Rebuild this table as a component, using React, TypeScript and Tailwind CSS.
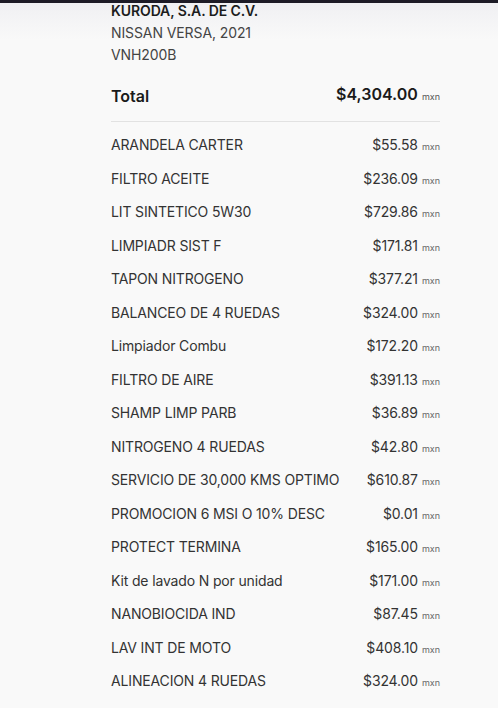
import React from "react";

const items: [string, string][] = [
  ["ARANDELA CARTER", "$55.58"],
  ["FILTRO ACEITE", "$236.09"],
  ["LIT SINTETICO 5W30", "$729.86"],
  ["LIMPIADR SIST F", "$171.81"],
  ["TAPON NITROGENO", "$377.21"],
  ["BALANCEO DE 4 RUEDAS", "$324.00"],
  ["Limpiador Combu", "$172.20"],
  ["FILTRO DE AIRE", "$391.13"],
  ["SHAMP LIMP PARB", "$36.89"],
  ["NITROGENO 4 RUEDAS", "$42.80"],
  ["SERVICIO DE 30,000 KMS OPTIMO", "$610.87"],
  ["PROMOCION 6 MSI O 10% DESC", "$0.01"],
  ["PROTECT TERMINA", "$165.00"],
  ["Kit de lavado N por unidad", "$171.00"],
  ["NANOBIOCIDA IND", "$87.45"],
  ["LAV INT DE MOTO", "$408.10"],
  ["ALINEACION 4 RUEDAS", "$324.00"],
];

export default function App() {
  return (
    <div
      className="relative w-[498px] h-[708px] overflow-hidden bg-[#f9f9f9]"
      style={{ fontFamily: "Inter, 'Open Sans', sans-serif" }}
    >
      <div className="absolute top-0 left-0 right-0 h-[40px] bg-gradient-to-b from-[#efeff2] to-[#f9f9f9]" />
      <div className="absolute top-0 left-0 right-0 h-[3px] bg-[#1d1b26]" />
      <div className="relative ml-[111px] w-[329px]">
        <div className="text-[14px] leading-[22px] font-semibold text-[#1c1c1c] tracking-[-0.1px]">
          KURODA, S.A. DE C.V.
        </div>
        <div className="text-[14px] leading-[22px] text-[#444] tracking-[-0.1px]">NISSAN VERSA, 2021</div>
        <div className="text-[14px] leading-[22px] text-[#444] tracking-[-0.1px]">VNH200B</div>
        <div className="mt-[18px] pb-[14px] border-b border-[#e2e2e2] flex items-center justify-between h-[38px]">
          <span className="text-[16px] leading-[24px] font-semibold text-[#1a1a1a]">Total</span>
          <span className="text-[16px] leading-[24px] font-semibold text-[#1a1a1a]">
            $4,304.00
            <span className="ml-[4px] text-[9px] font-normal text-[#555]">mxn</span>
          </span>
        </div>
        <div className="pt-[6px]">
          {items.map(([name, price]) => (
            <div
              key={name}
              className="h-[33.5px] flex items-center justify-between text-[14px] text-[#333] tracking-[-0.15px]"
            >
              <span>{name}</span>
              <span>
                {price}
                <span className="ml-[4px] text-[9px] text-[#666] tracking-normal">mxn</span>
              </span>
            </div>
          ))}
        </div>
      </div>
    </div>
  );
}
